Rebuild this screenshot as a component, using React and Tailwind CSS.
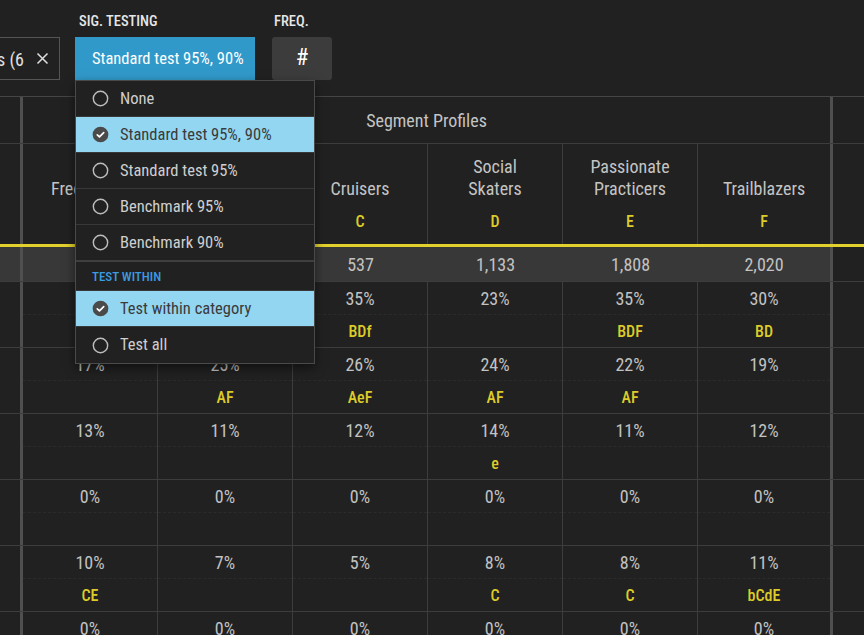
import React from "react";

const cols = [
  { name: ["Freestylers"], letter: "A", base: "482" },
  { name: ["Weekend", "Warriors"], letter: "B", base: "611" },
  { name: ["Cruisers"], letter: "C", base: "537" },
  { name: ["Social", "Skaters"], letter: "D", base: "1,133" },
  { name: ["Passionate", "Practicers"], letter: "E", base: "1,808" },
  { name: ["Trailblazers"], letter: "F", base: "2,020" },
];

const zeros = cols.map(() => ["0%", ""]);

const rows = [
  [["27%", "C"], ["31%", "CD"], ["35%", "BDf"], ["23%", ""], ["35%", "BDF"], ["30%", "BD"]],
  [["17%", ""], ["25%", "AF"], ["26%", "AeF"], ["24%", "AF"], ["22%", "AF"], ["19%", ""]],
  [["13%", ""], ["11%", ""], ["12%", ""], ["14%", "e"], ["11%", ""], ["12%", ""]],
  zeros,
  [["10%", "CE"], ["7%", ""], ["5%", ""], ["8%", "C"], ["8%", "C"], ["11%", "bCdE"]],
  zeros,
];

const options = [
  { label: "None" },
  { label: "Standard test 95%, 90%", checked: true },
  { label: "Standard test 95%" },
  { label: "Benchmark 95%" },
  { label: "Benchmark 90%", last: true },
];

function Radio({ checked }) {
  if (checked) {
    return (
      <svg width="17" height="17" viewBox="0 0 18 18" className="shrink-0">
        <circle cx="9" cy="9" r="8.3" fill="#4a4a4a" />
        <path d="M5.6 9.3 L7.9 11.5 L12.4 7" fill="none" stroke="#fff" strokeWidth="1.8" strokeLinecap="round" strokeLinejoin="round" />
      </svg>
    );
  }
  return (
    <svg width="17" height="17" viewBox="0 0 18 18" className="shrink-0">
      <circle cx="9" cy="9" r="7.6" fill="none" stroke="#bdbdbd" strokeWidth="1.5" />
    </svg>
  );
}

function Option({ label, checked, last }) {
  return (
    <div
      className={
        "flex items-center gap-[11px] pl-[16px] text-[16.5px] " +
        (last ? "h-[37px] border-b-2 border-[#3f3f3f] " : "h-[36px] border-b border-[#383838] ") +
        (checked ? "bg-[#93d6f2] text-[#3a3a3a]" : "text-[#cfcfcf]")
      }
    >
      <Radio checked={checked} />
      <span className="pt-px">{label}</span>
    </div>
  );
}

function SigMenu() {
  return (
    <div className="absolute left-0 top-full z-20 w-[240px] border border-[#4a4a4a] bg-[#212121] shadow-[0_4px_10px_rgba(0,0,0,0.5)]">
      {options.map((o) => (
        <Option key={o.label} {...o} />
      ))}
      <div className="flex h-[29px] items-center border-b border-[#383838] pl-[16px] pt-[2px] text-[13px] font-medium uppercase text-[#3a9be0]">
        Test within
      </div>
      <Option label="Test within category" checked />
      <div className="flex h-[36px] items-center gap-[11px] pl-[16px] text-[16.5px] text-[#cfcfcf]">
        <Radio />
        <span className="pt-px">Test all</span>
      </div>
    </div>
  );
}

function TopBar() {
  return (
    <div className="flex h-[96px] items-start pt-[13px]">
      <div className="-ml-[100px] flex flex-col">
        <div className="h-[17px] pl-1 text-[14.5px] font-medium uppercase leading-[17px] text-[#e6e6e6]">Segments</div>
        <div className="mt-[7px] flex h-[43px] w-[160px] items-center border border-[#555] pr-[10px]">
          <div className="flex flex-1 justify-end overflow-hidden">
            <span className="whitespace-nowrap pt-px text-[18px] text-[#e0e0e0]">All segments (6</span>
          </div>
          <svg width="13" height="13" viewBox="0 0 13 13" className="ml-[12px] shrink-0">
            <path d="M1.5 1.5 L11.5 11.5 M11.5 1.5 L1.5 11.5" stroke="#e0e0e0" strokeWidth="1.5" />
          </svg>
        </div>
      </div>

      <div className="ml-[15px] flex flex-col">
        <div className="h-[17px] pl-1 text-[14.5px] font-medium uppercase leading-[17px] text-[#e6e6e6]">Sig. testing</div>
        <div className="relative mt-[7px]">
          <button className="flex h-[43px] w-[180px] items-center bg-[#3199c9] pl-[17px] pt-px text-[16.5px] text-white">
            Standard test 95%, 90%
          </button>
          <SigMenu />
        </div>
      </div>

      <div className="ml-[17px] flex flex-col">
        <div className="h-[17px] pl-[2px] text-[14.5px] font-medium uppercase leading-[17px] text-[#e6e6e6]">Freq.</div>
        <button className="mt-[7px] flex h-[43px] w-[60px] items-center justify-center rounded-[3px] bg-[#3c3c3c] text-[23px] text-white">
          #
        </button>
      </div>
    </div>
  );
}

function Table() {
  return (
    <div className="border-t border-[#454545]">
      <div className="grid h-[47px] grid-cols-[23px_810px_1fr] border-b border-[#3d3d3d]">
        <div className="border-r-[3px] border-r-[#4f4f4f]" />
        <div className="flex items-center justify-center border-r-[3px] border-r-[#4f4f4f] pt-px text-[18px] text-[#c4c4c4]">
          Segment Profiles
        </div>
        <div />
      </div>

      <div className="grid h-[103px] grid-cols-[23px_repeat(6,135px)_1fr] border-b-[3px] border-b-[#e2d12d]">
        <div className="border-r-[3px] border-r-[#4f4f4f]" />
        {cols.map((c, i) => (
          <div
            key={c.letter}
            className={
              "flex flex-col items-center justify-end pb-[12px] text-center " +
              (i === 5 ? "border-r-[3px] border-r-[#4f4f4f]" : "border-r border-r-[#3d3d3d]")
            }
          >
            <div className="text-[18px] leading-[22px] text-[#c4c4c4]">
              {c.name.map((n) => (
                <div key={n}>{n}</div>
              ))}
            </div>
            <div className="mt-[12px] text-[16px] font-medium leading-[20px] text-[#dccb2a]">{c.letter}</div>
          </div>
        ))}
        <div />
      </div>

      <div className="grid h-[35px] grid-cols-[23px_repeat(6,135px)_1fr] border-b border-[#3d3d3d]">
        <div className="border-r-[3px] border-r-[#4f4f4f] bg-[#383838]" />
        {cols.map((c, i) => (
          <div
            key={c.letter}
            className={
              "flex items-center justify-center bg-[#383838] text-[18px] text-[#c2c2c2] " +
              (i === 5 ? "border-r-[3px] border-r-[#4f4f4f]" : "")
            }
          >
            {c.base}
          </div>
        ))}
        <div />
      </div>

      {rows.map((r, ri) => (
        <div key={ri} className="grid h-[66px] grid-cols-[23px_repeat(6,135px)_1fr] border-b border-[#3d3d3d]">
          <div className="border-r-[3px] border-r-[#4f4f4f]" />
          {r.map(([v, s], i) => (
            <div
              key={i}
              className={
                "flex flex-col " +
                (i === 5 ? "border-r-[3px] border-r-[#4f4f4f]" : "border-r border-r-[#3d3d3d]")
              }
            >
              <div className="flex h-[33px] items-center justify-center border-b border-dashed border-b-[#2b2b2b] pt-px text-[18px] text-[#c2c2c2]">
                {v}
              </div>
              <div className="flex flex-1 items-center justify-center pt-px text-[16px] font-medium text-[#dccb2a]">{s}</div>
            </div>
          ))}
          <div />
        </div>
      ))}
    </div>
  );
}

export default function App() {
  return (
    <div className="h-[635px] w-[864px] overflow-hidden bg-[#212121] font-['Roboto_Condensed','Roboto',sans-serif]">
      <TopBar />
      <Table />
    </div>
  );
}
